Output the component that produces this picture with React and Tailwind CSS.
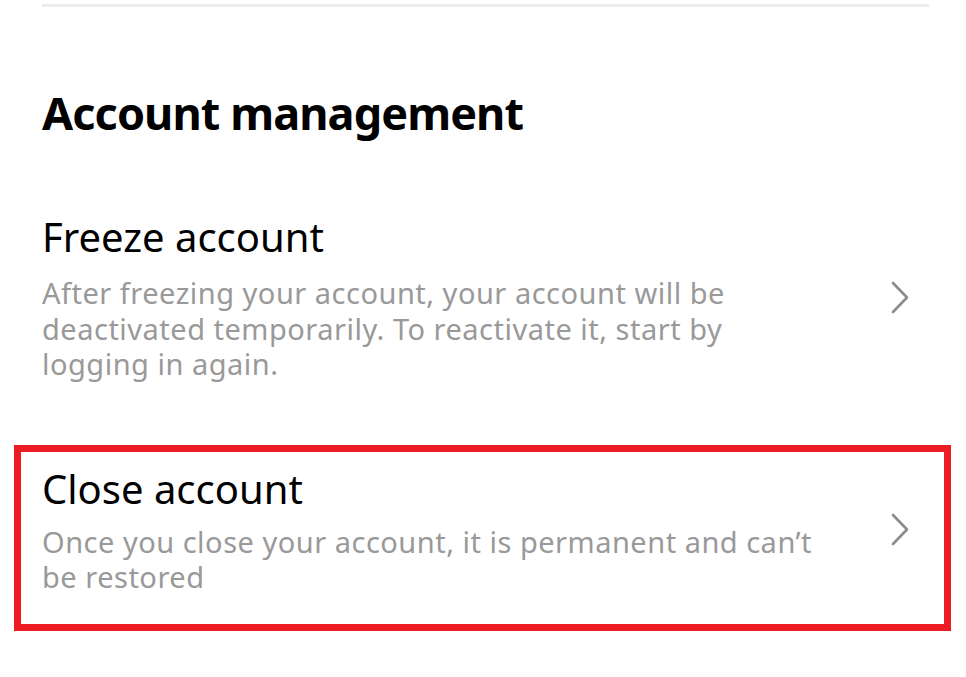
import React from "react";

const Chevron = () => (
  <svg width="18" height="33" viewBox="0 0 18 33" fill="none" className="shrink-0">
    <polyline
      points="2,2 16,16.5 2,31"
      stroke="#8c8c8c"
      strokeWidth="2.6"
      strokeLinecap="round"
      strokeLinejoin="round"
    />
  </svg>
);

export default function App() {
  return (
    <div
      className="min-h-screen bg-white pl-[42px] pr-[37px]"
      style={{ fontFamily: "'Noto Sans', Roboto, sans-serif" }}
    >
      {/* top divider */}
      <div className="mt-[4px] h-[3px] bg-[#ebebeb]" />

      <h1 className="mt-[78px] text-[45px] leading-[56px] font-bold tracking-[-0.9px] text-black">
        Account management
      </h1>

      {/* freeze */}
      <div className="mt-[72px] flex items-center justify-between pr-[20px]">
        <div className="w-[830px]">
          <div className="text-[40px] leading-[48px] text-black">Freeze account</div>
          <p className="mt-[14px] text-[29px] leading-[35.5px] tracking-[0.5px] text-[#999999]">
            After freezing your account, your account will be
            <br />
            deactivated temporarily. To reactivate it, start by
            <br />
            logging in again.
          </p>
        </div>
        <Chevron />
      </div>

      {/* close, highlighted */}
      <div className="-ml-[28px] -mr-[22px] mt-[63px] border-[7px] border-[#ed1c24] pl-[21px] pr-[35px] pt-[13px] pb-[29px]">
        <div className="flex items-center justify-between">
          <div className="w-[830px]">
            <div className="text-[40px] leading-[48px] text-black">Close account</div>
            <p className="mt-[11px] text-[29px] leading-[35.5px] tracking-[0.5px] text-[#999999]">
              Once you close your account, it is permanent and can’t
              <br />
              be restored
            </p>
          </div>
          <Chevron />
        </div>
      </div>
    </div>
  );
}
